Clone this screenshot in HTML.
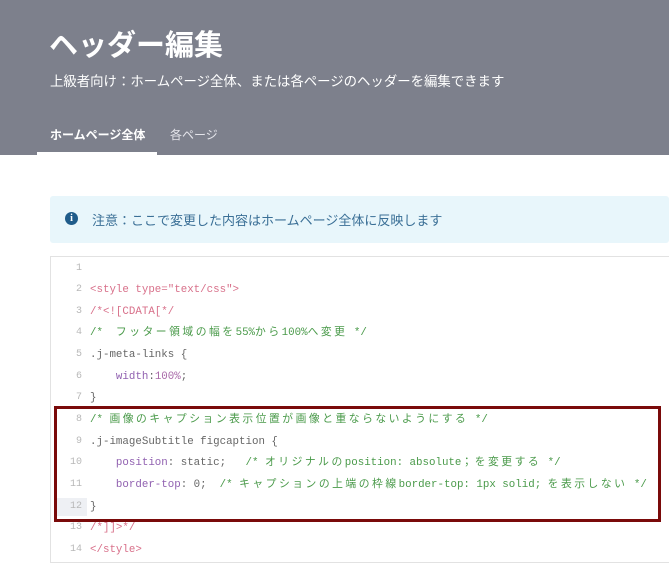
<!DOCTYPE html>
<html><head><meta charset="utf-8"><style>
body{margin:0;width:669px;height:574px;overflow:hidden;background:#fff;font-family:"Liberation Sans","Noto Sans CJK JP",sans-serif;position:relative}
.hd{position:absolute;left:0;top:0;width:669px;height:155px;background:#7d808c}
.t{position:absolute;left:49px;top:22px;color:#fff;font-size:29px;font-weight:bold}
.s{position:absolute;left:50px;top:70px;color:#fff;font-size:13.4px}
.tab1{position:absolute;left:50px;top:126px;color:#fff;font-size:12px;font-weight:bold}
.tab2{position:absolute;left:170px;top:126px;color:#e4e4ea;font-size:12px}
.ul{position:absolute;left:37px;top:152px;width:120px;height:4px;background:#fff}
.info{position:absolute;left:50px;top:196px;width:619px;height:47px;background:#e8f6fb;border-radius:3px}
.info .i{position:absolute;left:15px;top:16px;width:13px;height:13px;border-radius:50%;background:#1f5c8a;color:#fff;font-size:10px;font-weight:bold;text-align:center;line-height:13px;font-family:"Liberation Serif",serif}
.info span{position:absolute;left:42px;top:14px;font-size:13px;color:#3a6f96}
.ed{position:absolute;left:50px;top:256px;width:619px;height:307px;border:1px solid #e2e2e2;border-right:none;box-sizing:border-box}
.ln{position:absolute;left:52px;width:30px;text-align:right;font-family:"Liberation Mono",monospace;font-size:10px;color:#b8b8b8;line-height:14px}
.c{position:absolute;left:90px;font-family:"Liberation Mono","Noto Sans CJK JP",monospace;font-size:10.8px;white-space:pre;color:#666;line-height:14px}
.j{letter-spacing:2.5px}
.tg{color:#d8708a}.cm{color:#4a9a4a}.pr{color:#9060b0}.nm{color:#a868a8}
.box{position:absolute;left:54px;top:406px;width:607px;height:116px;border:3px solid #7a0a0a;box-sizing:border-box}
</style></head><body>
<div class="hd"></div>
<div class="t">ヘッダー編集</div>
<div class="s">上級者向け：ホームページ全体、または各ページのヘッダーを編集できます</div>
<div class="tab1">ホームページ全体</div>
<div class="tab2">各ページ</div>
<div class="ul"></div>
<div class="info"><div class="i">i</div><span>注意：ここで変更した内容はホームページ全体に反映します</span></div>
<div class="ed"></div>
<div style="position:absolute;left:57px;top:498px;width:30px;height:18px;background:#eef0f4"></div>
<div class="ln" style="top:262px">1</div>
<div class="ln" style="top:283px">2</div><div class="c tg" style="top:283px">&lt;style type="text/css"&gt;</div>
<div class="ln" style="top:305px">3</div><div class="c" style="top:305px"><span class="tg">/*&lt;![CDATA[*/</span></div>
<div class="ln" style="top:326px">4</div><div class="c cm" style="top:326px">/*  <span class="j">フッター領域の幅を</span>55%<span class="j">から</span>100%<span class="j">へ変更</span> */</div>
<div class="ln" style="top:348px">5</div><div class="c" style="top:348px">.j-meta-links {</div>
<div class="ln" style="top:370px">6</div><div class="c" style="top:370px">    <span class="pr">width</span>:<span class="nm">100%</span>;</div>
<div class="ln" style="top:391px">7</div><div class="c" style="top:391px">}</div>
<div class="ln" style="top:413px">8</div><div class="c cm" style="top:413px">/* <span class="j">画像のキャプション表示位置が画像と重ならないようにする</span> */</div>
<div class="ln" style="top:435px">9</div><div class="c" style="top:435px">.j-imageSubtitle figcaption {</div>
<div class="ln" style="top:456px">10</div><div class="c" style="top:456px">    <span class="pr">position</span>: static;   <span class="cm">/* <span class="j">オリジナルの</span>position: absolute<span class="j">；を変更する</span> */</span></div>
<div class="ln" style="top:478px">11</div><div class="c" style="top:478px">    <span class="pr">border-top</span>: 0;  <span class="cm">/* <span class="j">キャプションの上端の枠線</span>border-top: 1px solid; <span class="j">を表示しない</span> */</span></div>
<div class="ln" style="top:500px">12</div><div class="c" style="top:500px">}</div>
<div class="ln" style="top:521px">13</div><div class="c tg" style="top:521px">/*]]&gt;*/</div>
<div class="ln" style="top:543px">14</div><div class="c tg" style="top:543px">&lt;/style&gt;</div>
<div class="box"></div>
</body></html>
